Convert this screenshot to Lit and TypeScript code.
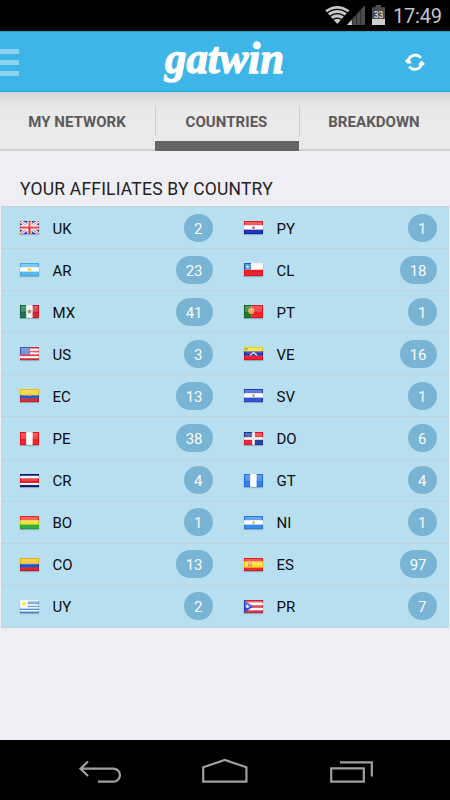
import { LitElement, html, css, svg } from "lit";
import { customElement, property } from "lit/decorators.js";

const bands = (colors: string[], vertical = false) => {
  const n = colors.length;
  return colors.map((c, i) =>
    vertical
      ? svg`<rect x=${(19 / n) * i} y="0" width=${19 / n + 0.05} height="13" fill=${c}/>`
      : svg`<rect x="0" y=${(13 / n) * i} width="19" height=${13 / n + 0.05} fill=${c}/>`
  );
};

const flags: Record<string, unknown> = {
  UK: svg`<rect width="19" height="13" fill="#2a3f9c"/>
    <path d="M0 0L19 13M19 0L0 13" stroke="#fff" stroke-width="3"/>
    <path d="M0 0L19 13M19 0L0 13" stroke="#e0404c" stroke-width="1"/>
    <path d="M9.5 0V13M0 6.5H19" stroke="#fff" stroke-width="4.4"/>
    <path d="M9.5 0V13M0 6.5H19" stroke="#e0202c" stroke-width="2.2"/>`,
  AR: svg`${bands(["#49b3ee", "#fff", "#49b3ee"])}<circle cx="9.5" cy="6.5" r="1.9" fill="#f4d43c"/>`,
  MX: svg`${bands(["#0f6a45", "#f4f4ee", "#cf1526"], true)}<circle cx="9.5" cy="6.5" r="1.9" fill="#8f9a72"/><rect x="9" y="5" width="1.4" height="2" fill="#7a5a3c"/>`,
  US: svg`${bands(["#e0303c", "#fff", "#e0303c", "#fff", "#e0303c", "#fff", "#e0303c"])}<rect width="10" height="7.4" fill="#3a5cc0"/>
    <path d="M1.5 2H9M1.5 4H9M1.5 6H9" stroke="#b9c8f2" stroke-width=".8" stroke-dasharray="1 1"/>`,
  EC: svg`<rect width="19" height="13" fill="#f5cc14"/><rect y="6.2" width="19" height="3.6" fill="#1f4fbe"/><rect y="9.6" width="19" height="3.4" fill="#d41c26"/>
    <circle cx="9.5" cy="5.8" r="1.3" fill="#c9a53c"/>`,
  PE: bands(["#f0141c", "#fff", "#f0141c"], true),
  CR: svg`<rect width="19" height="13" fill="#fff"/><rect width="19" height="2.1" fill="#0a1674"/><rect y="10.9" width="19" height="2.1" fill="#0a1674"/><rect y="4.2" width="19" height="4.8" fill="#e0161e"/>`,
  BO: bands(["#f02a1c", "#f2dc18", "#22a828"]),
  CO: svg`<rect width="19" height="13" fill="#f8b90c"/><rect y="5.9" width="19" height="4" fill="#1748c0"/><rect y="9.6" width="19" height="3.4" fill="#e0141c"/>`,
  UY: svg`${bands(["#fff", "#fff", "#4a86d2", "#fff", "#4a86d2", "#fff", "#4a86d2", "#fff", "#4a86d2"])}<rect x="7.5" y="1.4" width="11.5" height="1.4" fill="#4a86d2"/><rect width="7.5" height="7.2" fill="#fff"/><circle cx="3.9" cy="3.7" r="2.3" fill="#f3e23c"/>`,
  PY: svg`${bands(["#f01c1c", "#fff", "#1420b8"])}<circle cx="9.5" cy="6.5" r="1.6" fill="#c87878"/><circle cx="9.5" cy="6.5" r=".7" fill="#a03c3c"/>`,
  CL: svg`<rect width="19" height="13" fill="#fff"/><rect width="7" height="6.7" fill="#1668c4"/><rect y="6.7" width="19" height="6.3" fill="#e8141c"/>
    <path d="M3.6 1.8L4.2 3.2H5.6L4.5 4.1L4.9 5.5L3.6 4.7L2.4 5.5L2.8 4.1L1.7 3.2H3.1Z" fill="#fff"/>`,
  PT: svg`<rect width="7.2" height="13" fill="#176a22"/><rect x="7.2" width="11.8" height="13" fill="#f4141c"/><circle cx="7.2" cy="6" r="3" fill="#e8b83c"/><circle cx="7.2" cy="6" r="1.5" fill="#e46a52"/><circle cx="7.2" cy="6" r=".6" fill="#fff"/>`,
  VE: svg`${bands(["#f4e010", "#1420a8", "#ee1020"])}<path d="M6 8.2L9.5 5.6L13 8.2" fill="none" stroke="#e6e8ff" stroke-width="1.2"/><rect x="1" y="1" width="3" height="2" fill="#8c9c34"/>`,
  SV: svg`${bands(["#2244cc", "#fff", "#2244cc"])}<circle cx="9.5" cy="6.5" r="1.5" fill="#9cae60"/>`,
  DO: svg`<rect width="19" height="13" fill="#fff"/><path d="M0 0H8.2V5.2H0ZM10.8 7.8H19V13H10.8Z" fill="#1c3490"/><path d="M10.8 0H19V5.2H10.8ZM0 7.8H8.2V13H0Z" fill="#ea1828"/><rect x="8.9" y="5.9" width="1.2" height="1.2" fill="#8a9a6a"/>`,
  GT: bands(["#2474ec", "#fff", "#2474ec"], true),
  NI: svg`${bands(["#2a80ea", "#fff", "#2a80ea"])}<circle cx="9.5" cy="6.5" r="1.6" fill="#c9bd78"/>`,
  ES: svg`<rect width="19" height="13" fill="#ee1a1c"/><rect y="3.4" width="19" height="6.2" fill="#f8dc20"/><rect x="4" y="4.6" width="4" height="3.8" rx="1" fill="#cf8048"/><rect x="5.3" y="5.4" width="1.4" height="2" fill="#e8d4b0"/>`,
  PR: svg`${bands(["#d82430", "#fff", "#d82430", "#fff", "#d82430"])}<path d="M0 0L9.4 6.5L0 13Z" fill="#2c3cc4"/><path d="M3.4 4.2L4 5.8H5.6L4.4 6.8L4.8 8.4L3.4 7.5L2 8.4L2.4 6.8L1.2 5.8H2.8Z" fill="#fff"/>`,
};

const affiliates: [string, number][] = [
  ["UK", 2], ["PY", 1], ["AR", 23], ["CL", 18], ["MX", 41], ["PT", 1], ["US", 3],
  ["VE", 16], ["EC", 13], ["SV", 1], ["PE", 38], ["DO", 6], ["CR", 4], ["GT", 4],
  ["BO", 1], ["NI", 1], ["CO", 13], ["ES", 97], ["UY", 2], ["PR", 7],
];

@customElement("country-cell")
export class CountryCell extends LitElement {
  @property() code = "";
  @property({ type: Number }) count = 0;

  static styles = css`
    :host { display: flex; align-items: center; box-sizing: border-box; padding: 0 12.5px 0 19px; border-bottom: 1px solid #c3d1da; font-size: 15px; color: #0b0d0e; }
    .flag { width: 19px; height: 13px; flex: none; box-shadow: 0 1px 1px rgba(60, 90, 110, 0.35); }
    .code { margin-left: 13.5px; flex: 1; line-height: 20px; padding-top: 2px; }
    .badge { box-sizing: border-box; min-width: 28px; height: 28px; padding: 1px 10px 0; border-radius: 14px; background: #7ab4d4; color: #f6fbfe; line-height: 28px; text-align: center; }
  `;

  render() {
    return html`
      <svg class="flag" viewBox="0 0 19 13">
        <defs>
          <linearGradient id="gloss" x1="0" y1="0" x2="0" y2="1">
            <stop offset="0" stop-color="#fff" stop-opacity=".32"/>
            <stop offset=".5" stop-color="#fff" stop-opacity=".2"/>
            <stop offset=".55" stop-color="#fff" stop-opacity=".04"/>
            <stop offset="1" stop-color="#fff" stop-opacity=".1"/>
          </linearGradient>
        </defs>
        ${flags[this.code]}
        <rect x="1" y="1" width="17" height="11" fill="url(#gloss)"/>
        <rect x=".5" y=".5" width="18" height="12" fill="none" stroke="#000" stroke-opacity=".05"/>
      </svg>
      <span class="code">${this.code}</span>
      <span class="badge">${this.count}</span>
    `;
  }
}

@customElement("app-root")
export class AppRoot extends LitElement {
  static styles = css`
    :host { display: flex; flex-direction: column; width: 450px; height: 800px; overflow: hidden; background: #efeef4; font-family: Roboto, "Noto Sans", sans-serif; }
    .status { height: 31px; flex: none; background: #000; display: flex; justify-content: flex-end; }
    .status-art { width: 140px; height: 31px; display: block; }
    .header { height: 61px; flex: none; box-sizing: border-box; background: #3eb5e7; border-top: 1px solid #2b9fd0; border-bottom: 1px solid #1eabe6; display: grid; grid-template-columns: 1fr 140px 1fr; align-items: center; }
    .menu { display: grid; gap: 6px; width: 19px; margin-top: 2px; }
    .menu i { height: 5px; background: #8dd3f1; }
    .logo { width: 140px; height: 59px; display: block; overflow: visible; }
    .word { font: italic 700 44px "Liberation Serif", serif; fill: #fff; stroke: #fff; stroke-width: 1.3; stroke-linejoin: round; }
    .refresh { width: 22px; height: 20px; justify-self: end; margin-right: 24px; }
    .tabs { height: 59px; flex: none; box-sizing: border-box; display: grid; grid-template-columns: 155px 144px 151px; background: linear-gradient(#cfcfcf 0, #dedede 5px, #e7e7e7 14px, #e9e9e9 22px); border-bottom: 2px solid #cfcfcf; }
    .tab { position: relative; display: flex; align-items: center; justify-content: center; padding: 3px 1px 0 0; font-size: 15px; letter-spacing: 0.05px; font-weight: 700; color: #5a5a5a; box-sizing: border-box; }
    .tab + .tab::before { content: ""; position: absolute; left: 0; top: 14px; width: 1px; height: 30px; background: #cdcdcd; }
    .tab.active::after { content: ""; position: absolute; left: 0; right: 0; bottom: -2px; height: 10px; background: #656565; }
    .title { margin: 0; height: 55px; flex: none; box-sizing: border-box; padding: 28px 0 0 20px; font-size: 17.5px; letter-spacing: 0.2px; line-height: 20px; font-weight: 400; color: #222; white-space: nowrap; }
    .list { flex: none; height: 422px; box-sizing: border-box; margin: 0 1px; display: grid; grid-template-columns: 224px 224px; grid-template-rows: repeat(10, 1fr); background: #b8dff0; border-top: 1px solid #c9d3da; }
    .nav { margin-top: auto; height: 60px; flex: none; background: #000; }
    .nav-art { width: 450px; height: 60px; display: block; }
  `;

  render() {
    return html`
      <div class="status">
        <svg class="status-art" viewBox="310 0 140 31">
          <path d="M337.3 24L325.2 10.3Q337.3 1.7 349.4 10.3Z" fill="#c6c6c6"/>
          <path d="M326.5 13.4Q337.3 5.4 348.1 13.4M329.2 16.7Q337.3 10.6 345.4 16.7M332.2 20Q337.3 16.3 342.4 20" fill="none" stroke="#000" stroke-width="1.3"/>
          <path d="M365 5V25H347Z" fill="#4c4c4c"/>
          <path d="M352 19.5V25H347Z" fill="#d0d0d0"/>
          <path d="M352.3 19V25M356.5 14V25M360.7 9V25" stroke="#222" stroke-width=".8"/>
          <path d="M375.5 5H381V7.2H385V25H372V7.2H375.5Z" fill="#4c4c4c"/>
          <rect x="372" y="19" width="13" height="6" fill="#cfcfcf"/>
          <text x="378.5" y="18.4" text-anchor="middle" font-size="8.5" font-weight="500" fill="#ddd">33</text>
          <text x="393" y="23.2" font-size="20" textLength="49" fill="#c4c4c4">17:49</text>
        </svg>
      </div>
      <div class="header">
        <div class="menu"><i></i><i></i><i></i></div>
        <svg class="logo" viewBox="155 32 140 59">
          <text class="word" x="165" y="72.5" textLength="119" lengthAdjust="spacingAndGlyphs">gatwin</text>
        </svg>
        <svg class="refresh" viewBox="404 51 22 20">
          <path d="M420.8 56.9A7 7 0 0 0 408.5 59.5M409.2 65.5A7 7 0 0 0 421.6 63" fill="none" stroke="#fff" stroke-width="2.7"/>
          <path d="M405 59.4L409 56.6L411.6 62.6L407 62.6ZM425 63L421.2 65.8L418.2 63.2L421.6 59.6Z" fill="#fff"/>
        </svg>
      </div>
      <div class="tabs">
        <div class="tab">MY NETWORK</div>
        <div class="tab active">COUNTRIES</div>
        <div class="tab">BREAKDOWN</div>
      </div>
      <h1 class="title">YOUR AFFILIATES BY COUNTRY</h1>
      <div class="list">
        ${affiliates.map(([code, count]) => html`<country-cell .code=${code} .count=${count}></country-cell>`)}
      </div>
      <div class="nav">
        <svg class="nav-art" viewBox="0 740 450 60" fill="none" stroke="#a0a0a0" stroke-width="2.2">
          <path d="M88 761.5L80.5 768.7L88 776M81 768.7H113.5A6.4 6.4 0 0 1 113.5 781.6H98"/>
          <path d="M203.2 781.6V767.3L224.8 760L246.4 767.3V781.6Z"/>
          <path d="M331.2 768.4H363.8V781.6H331.2ZM340 762.4H371.8V776.5"/>
        </svg>
      </div>
    `;
  }
}
